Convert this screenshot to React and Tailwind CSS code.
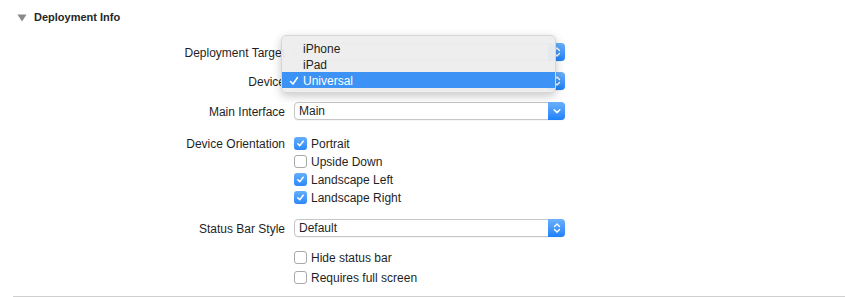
import React from 'react';

function Chevron({ both }) {
  return (
    <svg width="8" height="12" viewBox="0 0 8 12" className="block">
      {both ? (
        <>
          <path d="M1.5 4.5 L4 2 L6.5 4.5" fill="none" stroke="white" strokeWidth="1.4" strokeLinecap="round" strokeLinejoin="round" />
          <path d="M1.5 7.5 L4 10 L6.5 7.5" fill="none" stroke="white" strokeWidth="1.4" strokeLinecap="round" strokeLinejoin="round" />
        </>
      ) : (
        <path d="M1.2 4.8 L4 7.6 L6.8 4.8" fill="none" stroke="white" strokeWidth="1.5" strokeLinecap="round" strokeLinejoin="round" />
      )}
    </svg>
  );
}

function Popup({ value, both }) {
  return (
    <div className="flex h-[18px] w-[271px] items-stretch rounded-[4px] border border-[#c6c6c6] bg-white shadow-[0_0.5px_0.5px_rgba(0,0,0,0.08)]">
      <div className="flex flex-1 items-center pl-[4px] text-[12px] text-[#1f1f1f]">{value}</div>
      <div className="-my-px -mr-px flex w-[17px] items-center justify-center rounded-r-[4px] bg-gradient-to-b from-[#6ab1fb] to-[#1c80f9]">
        <Chevron both={both} />
      </div>
    </div>
  );
}

function Check({ on, label }) {
  return (
    <div className="flex h-[18px] items-center gap-[4px] pt-px">
      {on ? (
        <div className="flex h-[13px] w-[13px] items-center justify-center rounded-[3px] bg-gradient-to-b from-[#65affb] to-[#2a88f8]">
          <svg width="9" height="9" viewBox="0 0 9 9">
            <path d="M1.8 4.8 L3.7 6.7 L7.2 2.2" fill="none" stroke="white" strokeWidth="1.5" strokeLinecap="round" strokeLinejoin="round" />
          </svg>
        </div>
      ) : (
        <div className="h-[13px] w-[13px] rounded-[3px] border border-[#a9a9a9] bg-white" />
      )}
      <span className="text-[12px] text-[#1f1f1f]">{label}</span>
    </div>
  );
}

function Row({ label, className, children }) {
  return (
    <div className={`flex items-start ${className || ''}`}>
      <div className="flex h-[18px] w-[285px] shrink-0 items-center justify-end pt-px text-[12px] text-[#1f1f1f]">{label}</div>
      <div className="ml-[9px] flex flex-col">{children}</div>
    </div>
  );
}

export default function App() {
  return (
    <div className="relative h-[297px] w-[855px] overflow-hidden bg-white font-['Liberation_Sans',Arial,sans-serif]">
      {/* header */}
      <div className="flex h-[34px] items-center pl-[17px] pt-px">
        <svg width="10" height="8" viewBox="0 0 10 8">
          <path d="M0.5 0.5 H9.5 L5 7.5 Z" fill="#8a8a8a" />
        </svg>
        <span className="ml-[7px] text-[11px] font-bold text-[#262626]">Deployment Info</span>
      </div>

      <Row label="Deployment Target" className="mt-[9px]">
        <Popup value="" both />
      </Row>
      <Row label="Device" className="mt-[11px]">
        <Popup value="" both />
      </Row>
      <Row label="Main Interface" className="mt-[12px]">
        <Popup value="Main" />
      </Row>
      <Row label="Device Orientation" className="mt-[14px]">
        <Check on label="Portrait" />
        <Check label="Upside Down" />
        <Check on label="Landscape Left" />
        <Check on label="Landscape Right" />
      </Row>
      <Row label="Status Bar Style" className="mt-[13px]">
        <Popup value="Default" both />
      </Row>
      <Row label="" className="mt-[11px]">
        <Check label="Hide status bar" />
        <div className="h-[2px]" />
        <Check label="Requires full screen" />
      </Row>

      <div className="absolute bottom-0 left-[13px] right-[10px] h-px bg-[#cfcfcf]" />

      {/* open popup menu */}
      <div className="absolute left-[281px] top-[35px] w-[275px] rounded-[5px] border border-[#d6d6d6] bg-[#ededed]/95 pt-[4px] pb-[4px] shadow-[0_3px_10px_rgba(0,0,0,0.22)]">
        <div className="flex h-[16px] items-center pl-[21px] pt-px text-[12px] text-[#1f1f1f]">iPhone</div>
        <div className="flex h-[16px] items-center pl-[21px] pt-px text-[12px] text-[#1f1f1f]">iPad</div>
        <div className="flex h-[16px] items-center bg-[#3c92f5] pt-px text-[12px] text-white">
          <span className="flex w-[21px] justify-center pl-[2px]">
            <svg width="10" height="10" viewBox="0 0 10 10">
              <path d="M1.5 5.5 L4 8 L8.5 1.5" fill="none" stroke="white" strokeWidth="1.5" strokeLinecap="round" strokeLinejoin="round" />
            </svg>
          </span>
          <span>Universal</span>
        </div>
      </div>
    </div>
  );
}
